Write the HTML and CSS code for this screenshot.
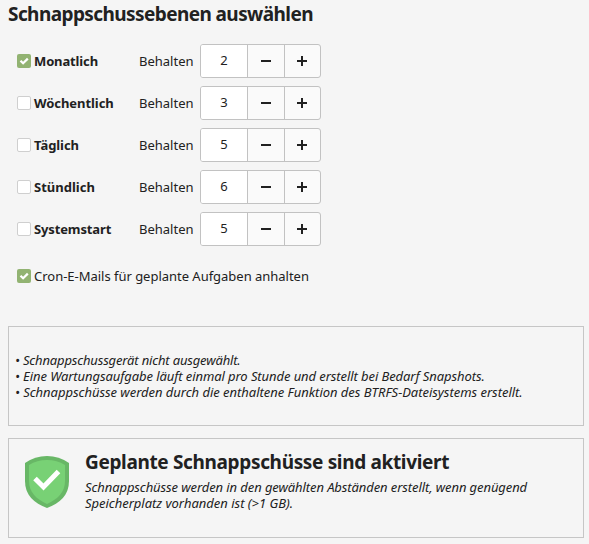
FILE: index.html
```
<!DOCTYPE html>
<html lang="de">
<head>
<meta charset="utf-8">
<title>Schnappschussebenen</title>
<link rel="stylesheet" href="styles.css">
</head>
<body>
<svg class="defs" aria-hidden="true">
  <symbol id="check" viewBox="0 0 14 14"><path d="M3.5 6.7 6.1 9.3 10.8 4.6" fill="none" stroke="#fff" stroke-width="2.2"/></symbol>
  <symbol id="minus" viewBox="0 0 10 10"><path d="M0 4h10v2H0z"/></symbol>
  <symbol id="plus" viewBox="0 0 10 10"><path d="M4 0h2v4h4v2H6v4H4V6H0V4h4z"/></symbol>
</svg>
<main>
  <h1 class="title">Schnappschussebenen auswählen</h1>
  <div class="levels">
    <div class="row"><span class="box on"><svg><use href="#check"/></svg></span><b class="name monthly">Monatlich</b><span class="keep">Behalten</span><div class="spin"><span class="num">2</span><span class="btn"><svg><use href="#minus"/></svg></span><span class="btn"><svg><use href="#plus"/></svg></span></div></div>
    <div class="row"><span class="box"></span><b class="name weekly">Wöchentlich</b><span class="keep">Behalten</span><div class="spin"><span class="num">3</span><span class="btn"><svg><use href="#minus"/></svg></span><span class="btn"><svg><use href="#plus"/></svg></span></div></div>
    <div class="row"><span class="box"></span><b class="name weekly">Täglich</b><span class="keep">Behalten</span><div class="spin"><span class="num">5</span><span class="btn"><svg><use href="#minus"/></svg></span><span class="btn"><svg><use href="#plus"/></svg></span></div></div>
    <div class="row"><span class="box"></span><b class="name">Stündlich</b><span class="keep">Behalten</span><div class="spin"><span class="num">6</span><span class="btn"><svg><use href="#minus"/></svg></span><span class="btn"><svg><use href="#plus"/></svg></span></div></div>
    <div class="row"><span class="box"></span><b class="name boot">Systemstart</b><span class="keep">Behalten</span><div class="spin"><span class="num">5</span><span class="btn"><svg><use href="#minus"/></svg></span><span class="btn"><svg><use href="#plus"/></svg></span></div></div>
  </div>
  <div class="cron"><span class="box on"><svg><use href="#check"/></svg></span><span class="label">Cron-E-Mails für geplante Aufgaben anhalten</span></div>
  <section class="panel notes">
    <p class="device">• Schnappschussgerät nicht ausgewählt.</p>
    <p class="task">• Eine Wartungsaufgabe läuft einmal pro Stunde und erstellt bei Bedarf Snapshots.</p>
    <p class="btrfs">• Schnappschüsse werden durch die enthaltene Funktion des BTRFS-Dateisystems erstellt.</p>
  </section>
  <section class="panel status">
    <svg class="shield" viewBox="0 0 44 52">
      <path d="M0 7Q10 0 22 0T44 7V25C44 39 35 47 22 52 9 47 0 39 0 25Z" fill="#68b766"/>
      <path d="M4 9Q12 4 22 4T40 9V25C40 36 33 43 22 48 11 43 4 36 4 25Z" fill="#78d175"/>
      <path d="M10 22.5 18.5 31 33.5 15.5" fill="none" stroke="#fff" stroke-width="5"/>
    </svg>
    <div>
      <h2 class="active">Geplante Schnappschüsse sind aktiviert</h2>
      <p class="interval">Schnappschüsse werden in den gewählten Abständen erstellt, wenn genügend</p>
      <p class="space">Speicherplatz vorhanden ist (&gt;1 GB).</p>
    </div>
  </section>
</main>
</body>
</html>
```
FILE: styles.css
```
* { box-sizing: border-box; }
body {
  margin: 0;
  background: #f5f5f5;
  color: #212121;
  font: 13px/16px "Noto Sans", "Open Sans", sans-serif;
  white-space: nowrap;
  overflow: hidden;
}
svg { display: block; }
.defs { position: absolute; width: 0; height: 0; }
main { padding: 0 5px 0 8px; }
h1, h2, p { margin: 0; }
.title, .active { font-size: 19px; line-height: 28px; font-weight: 700; }
.title { letter-spacing: -.58px; }
.active { letter-spacing: -.34px; }
.levels { display: flex; flex-direction: column; gap: 8px; padding: 16px 0 0 9px; }
.row { display: flex; align-items: center; height: 34px; }
.box {
  flex: none;
  width: 14px;
  height: 14px;
  margin-right: 3px;
  background: #fff;
  border: 1px solid #cfcfcf;
  border-radius: 2px;
}
.box.on { background: #92b372; border: 0; }
.box svg { width: 14px; height: 14px; }
.name { width: 105px; }
.monthly, .boot { letter-spacing: -.13px; }
.weekly { letter-spacing: -.06px; }
.keep { width: 61px; }
.spin {
  display: flex;
  width: 121px;
  height: 34px;
  background: #fafafa;
  border: 1px solid #c2c2c2;
  border-radius: 3px;
  overflow: hidden;
}
.num { width: 46px; background: #fff; text-align: center; line-height: 31px; }
.btn {
  display: flex;
  align-items: center;
  justify-content: center;
  width: 37px;
  border-left: 1px solid #c2c2c2;
}
.btn:last-child { width: 36px; padding-right: 1px; }
.btn svg { width: 10px; height: 10px; fill: #212121; }
.cron { display: flex; align-items: center; height: 20px; margin: 20px 0 0 9px; }
.label { letter-spacing: -.02px; }
.panel { height: 100px; border: 1px solid #c6c6c6; }
.panel p { font-style: italic; }
.notes { margin-top: 40px; padding: 25px 6px; }
.device { letter-spacing: -.16px; }
.task { letter-spacing: -.08px; }
.btrfs { letter-spacing: -.03px; }
.status { display: flex; margin-top: 12px; padding: 9px 16px; }
.shield { width: 44px; height: 52px; margin: 8px 16px 0 0; }
.active { margin-bottom: 3px; }
.interval { letter-spacing: -.09px; }
.space { letter-spacing: -.02px; }
```
